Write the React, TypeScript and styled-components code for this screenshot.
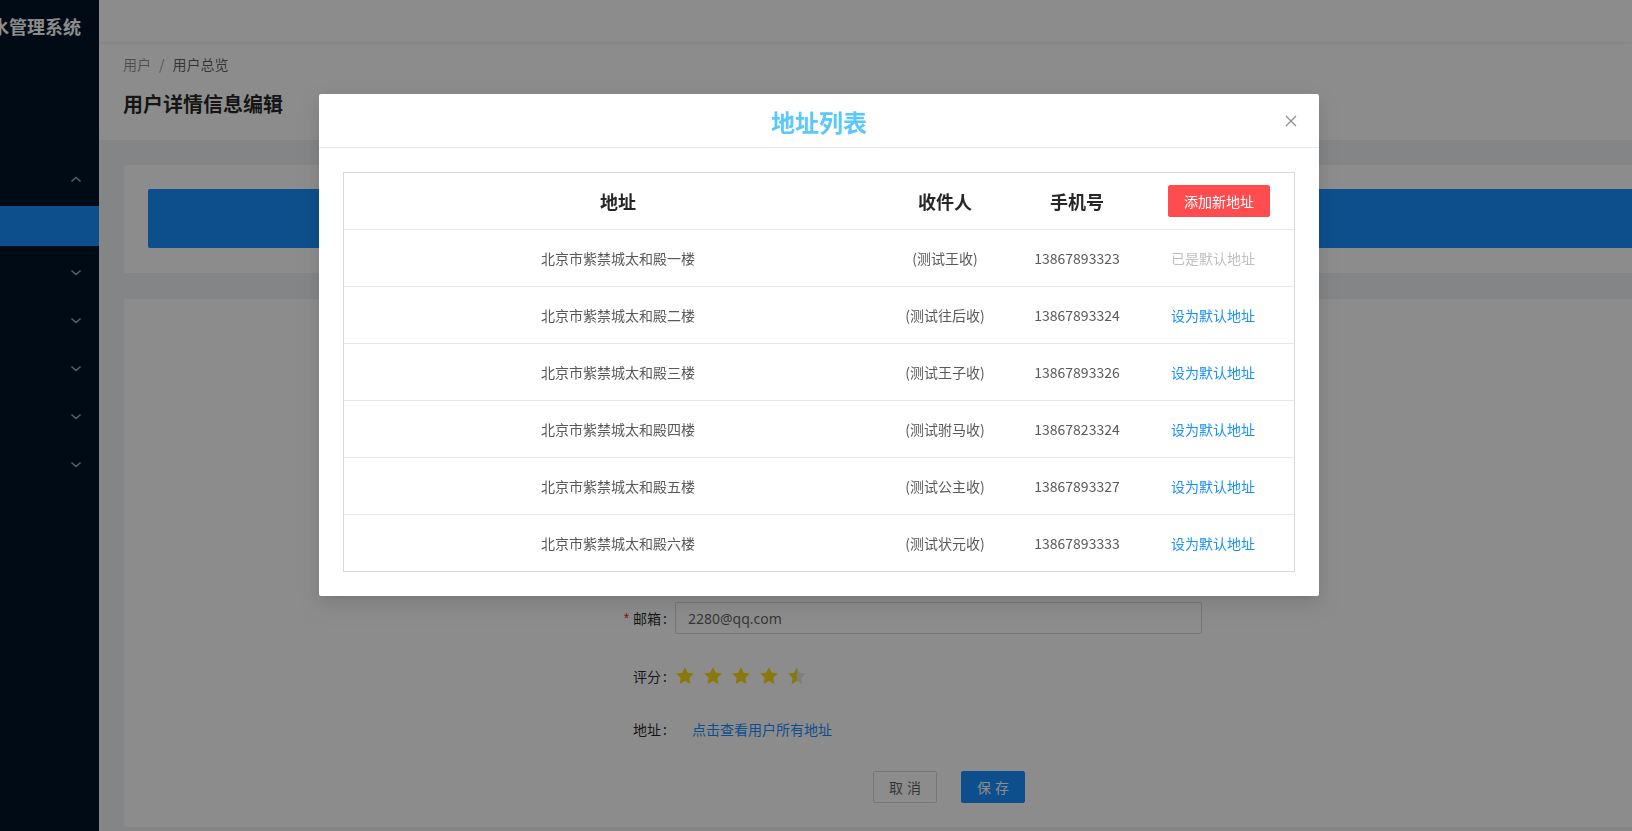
import React from "react";
import styled, { createGlobalStyle } from "styled-components";

const GlobalStyle = createGlobalStyle`
  html, body {
    margin: 0;
    padding: 0;
    height: 100%;
    overflow: hidden;
    font-family: "Noto Sans", "Noto Sans CJK SC", sans-serif;
    font-size: 14px;
    color: rgba(0, 0, 0, 0.65);
  }
  * { box-sizing: border-box; }
`;

const Layout = styled.div`
  display: flex;
  width: 100vw;
  height: 100vh;
  overflow: hidden;
`;

const Sider = styled.aside`
  width: 99px;
  flex: 0 0 99px;
  background: #001529;
  display: flex;
  flex-direction: column;
  overflow: hidden;
`;

const SiderLogo = styled.div`
  height: 52px;
  display: flex;
  align-items: center;
  justify-content: flex-end;
  padding-right: 18px;
  overflow: hidden;
  white-space: nowrap;
  color: #ffffff;
  font-weight: 700;
  font-size: 18px;
  font-family: "Noto Sans CJK SC", sans-serif;
`;

const Menu = styled.nav`
  display: flex;
  flex-direction: column;
  padding-top: 107px;
`;

const MenuTitle = styled.div<{ $mt?: number }>`
  height: 40px;
  margin-top: ${(p) => p.$mt ?? 0}px;
  display: flex;
  align-items: center;
  justify-content: flex-end;
  padding-right: 18px;
  color: rgba(255, 255, 255, 0.65);
`;

const MenuItem = styled.div<{ $active?: boolean; $mt?: number }>`
  height: 40px;
  margin-top: ${(p) => p.$mt ?? 0}px;
  background: ${(p) => (p.$active ? "#1890ff" : "transparent")};
`;

const Chevron = ({ up }: { up?: boolean }) => (
  <svg width="10" height="6" viewBox="0 0 10 6">
    <polyline
      points={up ? "1,5 5,1.5 9,5" : "1,1 5,4.5 9,1"}
      fill="none"
      stroke="rgba(255,255,255,0.65)"
      strokeWidth="1.6"
      strokeLinecap="round"
      strokeLinejoin="round"
    />
  </svg>
);

const Main = styled.main`
  flex: 1;
  min-width: 0;
  display: flex;
  flex-direction: column;
  background: #f0f2f5;
`;

const TopBar = styled.header`
  height: 42px;
  flex: 0 0 42px;
  background: #ffffff;
  box-shadow: 0 1px 2px rgba(0, 21, 41, 0.08);
  position: relative;
  z-index: 1;
`;

const PageHeader = styled.section`
  background: #ffffff;
  height: 98px;
  padding: 11px 24px 0 24px;
  display: flex;
  flex-direction: column;
  gap: 13px;
`;

const Breadcrumb = styled.div`
  display: flex;
  align-items: center;
  gap: 8px;
  line-height: 22px;
  font-size: 14px;
  font-family: "Noto Sans CJK SC", sans-serif;
`;

const Crumb = styled.span<{ $current?: boolean }>`
  color: ${(p) => (p.$current ? "rgba(0,0,0,0.65)" : "rgba(0,0,0,0.45)")};
`;

const PageTitle = styled.h1`
  margin: 0;
  font-size: 20px;
  line-height: 32px;
  font-weight: 700;
  color: rgba(0, 0, 0, 0.85);
  font-family: "Noto Sans CJK SC", sans-serif;
`;

const Content = styled.div`
  flex: 1;
  padding: 25px 0 0 25px;
  display: flex;
  flex-direction: column;
  gap: 26px;
`;

const Card = styled.div<{ $h: number }>`
  background: #ffffff;
  height: ${(p) => p.$h}px;
  flex: 0 0 auto;
`;

const BannerCard = styled(Card)`
  padding: 24px 0 25px 24px;
`;

const Banner = styled.div`
  height: 59px;
  background: #1890ff;
  border-radius: 2px 0 0 2px;
`;

const FormCard = styled(Card)`
  padding: 23px 0 0 431px;
  display: flex;
  flex-direction: column;
`;

const FormRow = styled.div<{ $h?: number; $mb?: number }>`
  display: flex;
  align-items: center;
  height: ${(p) => p.$h ?? 32}px;
  margin-bottom: ${(p) => p.$mb ?? 24}px;
`;

const Label = styled.label`
  width: 120px;
  flex: 0 0 120px;
  display: flex;
  justify-content: flex-end;
  align-items: center;
  color: rgba(0, 0, 0, 0.85);
  font-family: "Noto Sans CJK SC", sans-serif;
  white-space: nowrap;
`;

const Colon = styled.span`
  margin: 0 8px 0 2px;
`;

const Required = styled.span`
  color: #f5222d;
  margin-right: 4px;
  font-family: "Liberation Sans", sans-serif;
`;

const Input = styled.div`
  width: 527px;
  height: 32px;
  border: 1px solid #d9d9d9;
  border-radius: 2px;
  padding: 0 12px;
  display: flex;
  align-items: center;
  color: rgba(0, 0, 0, 0.65);
  background: #fff;
`;

const Stars = styled.div`
  display: flex;
  gap: 8px;
`;

const LinkButton = styled.span`
  padding: 0 15px 0 17px;
  color: #1890ff;
  font-family: "Noto Sans CJK SC", sans-serif;
`;

const Actions = styled.div`
  display: flex;
  gap: 24px;
  padding-left: 318px;
`;

const Button = styled.button<{ $primary?: boolean }>`
  width: 64px;
  height: 32px;
  border-radius: 2px;
  border: 1px solid ${(p) => (p.$primary ? "#1890ff" : "#d9d9d9")};
  background: ${(p) => (p.$primary ? "#1890ff" : "#ffffff")};
  color: ${(p) => (p.$primary ? "#ffffff" : "rgba(0,0,0,0.65)")};
  font-size: 14px;
  letter-spacing: 4px;
  padding: 0 0 0 4px;
  font-family: "Noto Sans CJK SC", sans-serif;
`;

const Star = ({ fill }: { fill: "full" | "half" }) => (
  <svg width="20" height="20" viewBox="0 0 20 20">
    <defs>
      <clipPath id="halfClip">
        <rect x="0" y="0" width="10" height="20" />
      </clipPath>
    </defs>
    <path
      d="M10 1.2l2.7 5.6 6.1.8-4.5 4.3 1.1 6.1L10 15.1 4.6 18l1.1-6.1L1.2 7.6l6.1-.8z"
      fill={fill === "full" ? "#fadb14" : "#e8e8e8"}
    />
    {fill === "half" && (
      <path
        d="M10 1.2l2.7 5.6 6.1.8-4.5 4.3 1.1 6.1L10 15.1 4.6 18l1.1-6.1L1.2 7.6l6.1-.8z"
        fill="#fadb14"
        clipPath="url(#halfClip)"
      />
    )}
  </svg>
);

/* ---------- modal ---------- */

const Mask = styled.div`
  position: fixed;
  inset: 0;
  background: rgba(0, 0, 0, 0.45);
  z-index: 10;
`;

const Modal = styled.div`
  position: fixed;
  top: 94px;
  left: 319px;
  width: 1000px;
  background: #ffffff;
  border-radius: 2px;
  z-index: 11;
  box-shadow: 0 3px 6px -4px rgba(0, 0, 0, 0.12), 0 6px 16px 0 rgba(0, 0, 0, 0.08),
    0 9px 28px 8px rgba(0, 0, 0, 0.05);
`;

const ModalHeader = styled.div`
  height: 54px;
  border-bottom: 1px solid #e8e8e8;
  display: flex;
  align-items: center;
  justify-content: center;
  position: relative;
`;

const ModalTitle = styled.h2`
  margin: 0;
  font-size: 24px;
  font-weight: 700;
  color: #5ac8fa;
  font-family: "Noto Sans CJK SC", sans-serif;
  line-height: 32px;
  padding-top: 2px;
`;

const CloseButton = styled.span`
  position: absolute;
  right: 22px;
  top: 21px;
  width: 12px;
  height: 12px;
  display: flex;
`;

const ModalBody = styled.div`
  padding: 24px;
`;

const Table = styled.div`
  border: 1px solid #d9d9d9;
  display: flex;
  flex-direction: column;
`;

const Row = styled.div<{ $last?: boolean }>`
  display: grid;
  grid-template-columns: 548px 106px 158px 138px;
  height: ${(p) => (p.$last ? 56 : 57)}px;
  border-bottom: ${(p) => (p.$last ? "none" : "1px solid #e8e8e8")};
  align-items: center;
`;

const HeadCell = styled.div`
  text-align: center;
  font-size: 18px;
  font-weight: 700;
  color: #262626;
  font-family: "Noto Sans CJK SC", sans-serif;
`;

const Cell = styled.div`
  text-align: center;
  font-size: 14px;
  color: #595959;
  font-family: "Noto Sans CJK SC", sans-serif;
`;

const ActionCell = styled.div`
  display: flex;
  justify-content: flex-start;
  padding-left: 12px;
  font-size: 14px;
  font-family: "Noto Sans CJK SC", sans-serif;
`;

const DangerButton = styled.button`
  width: 102px;
  height: 32px;
  border: 1px solid #ff4d4f;
  border-radius: 2px;
  background: #ff4d4f;
  color: #ffffff;
  font-size: 14px;
  padding: 0;
  font-family: "Noto Sans CJK SC", sans-serif;
`;

const ActionText = styled.span<{ $disabled?: boolean }>`
  padding-left: 3px;
  color: ${(p) => (p.$disabled ? "#bfbfbf" : "#1890ff")};
`;

const addresses = [
  { addr: "北京市紫禁城太和殿一楼", name: "(测试王收)", phone: "13867893323", isDefault: true },
  { addr: "北京市紫禁城太和殿二楼", name: "(测试往后收)", phone: "13867893324" },
  { addr: "北京市紫禁城太和殿三楼", name: "(测试王子收)", phone: "13867893326" },
  { addr: "北京市紫禁城太和殿四楼", name: "(测试驸马收)", phone: "13867823324" },
  { addr: "北京市紫禁城太和殿五楼", name: "(测试公主收)", phone: "13867893327" },
  { addr: "北京市紫禁城太和殿六楼", name: "(测试状元收)", phone: "13867893333" },
];

const hiddenFields = ["用户名", "昵称", "手机号", "性别", "生日"];

export default function App() {
  return (
    <>
      <GlobalStyle />
      <Layout>
        <Sider>
          <SiderLogo>供水管理系统</SiderLogo>
          <Menu>
            <MenuTitle>
              <Chevron up />
            </MenuTitle>
            <MenuItem $active $mt={7} />
            <MenuTitle $mt={7}>
              <Chevron />
            </MenuTitle>
            <MenuTitle $mt={8}>
              <Chevron />
            </MenuTitle>
            <MenuTitle $mt={8}>
              <Chevron />
            </MenuTitle>
            <MenuTitle $mt={8}>
              <Chevron />
            </MenuTitle>
            <MenuTitle $mt={8}>
              <Chevron />
            </MenuTitle>
          </Menu>
        </Sider>
        <Main>
          <TopBar />
          <PageHeader>
            <Breadcrumb>
              <Crumb>用户</Crumb>
              <Crumb>/</Crumb>
              <Crumb $current>用户总览</Crumb>
            </Breadcrumb>
            <PageTitle>用户详情信息编辑</PageTitle>
          </PageHeader>
          <Content>
            <BannerCard $h={108}>
              <Banner />
            </BannerCard>
            <FormCard $h={528}>
              {hiddenFields.map((f) => (
                <FormRow key={f}>
                  <Label>
                    {f}
                    <Colon>:</Colon>
                  </Label>
                  <Input />
                </FormRow>
              ))}
              <FormRow>
                <Label>
                  <Required>*</Required>邮箱<Colon>:</Colon>
                </Label>
                <Input>2280@qq.com</Input>
              </FormRow>
              <FormRow $h={36} $mb={19}>
                <Label>
                  评分<Colon>:</Colon>
                </Label>
                <Stars>
                  <Star fill="full" />
                  <Star fill="full" />
                  <Star fill="full" />
                  <Star fill="full" />
                  <Star fill="half" />
                </Stars>
              </FormRow>
              <FormRow $mb={26}>
                <Label>
                  地址<Colon>:</Colon>
                </Label>
                <LinkButton>点击查看用户所有地址</LinkButton>
              </FormRow>
              <FormRow $mb={0}>
                <Actions>
                  <Button>取消</Button>
                  <Button $primary>保存</Button>
                </Actions>
              </FormRow>
            </FormCard>
          </Content>
        </Main>
      </Layout>
      <Mask />
      <Modal>
        <ModalHeader>
          <ModalTitle>地址列表</ModalTitle>
          <CloseButton>
            <svg width="12" height="12" viewBox="0 0 12 12">
              <path d="M1 1L11 11M11 1L1 11" stroke="#8c8c8c" strokeWidth="1.2" />
            </svg>
          </CloseButton>
        </ModalHeader>
        <ModalBody>
          <Table>
            <Row>
              <HeadCell>地址</HeadCell>
              <HeadCell>收件人</HeadCell>
              <HeadCell>手机号</HeadCell>
              <ActionCell>
                <DangerButton>添加新地址</DangerButton>
              </ActionCell>
            </Row>
            {addresses.map((a, i) => (
              <Row key={a.phone + i} $last={i === addresses.length - 1}>
                <Cell>{a.addr}</Cell>
                <Cell>{a.name}</Cell>
                <Cell>{a.phone}</Cell>
                <ActionCell>
                  <ActionText $disabled={a.isDefault}>
                    {a.isDefault ? "已是默认地址" : "设为默认地址"}
                  </ActionText>
                </ActionCell>
              </Row>
            ))}
          </Table>
        </ModalBody>
      </Modal>
    </>
  );
}
